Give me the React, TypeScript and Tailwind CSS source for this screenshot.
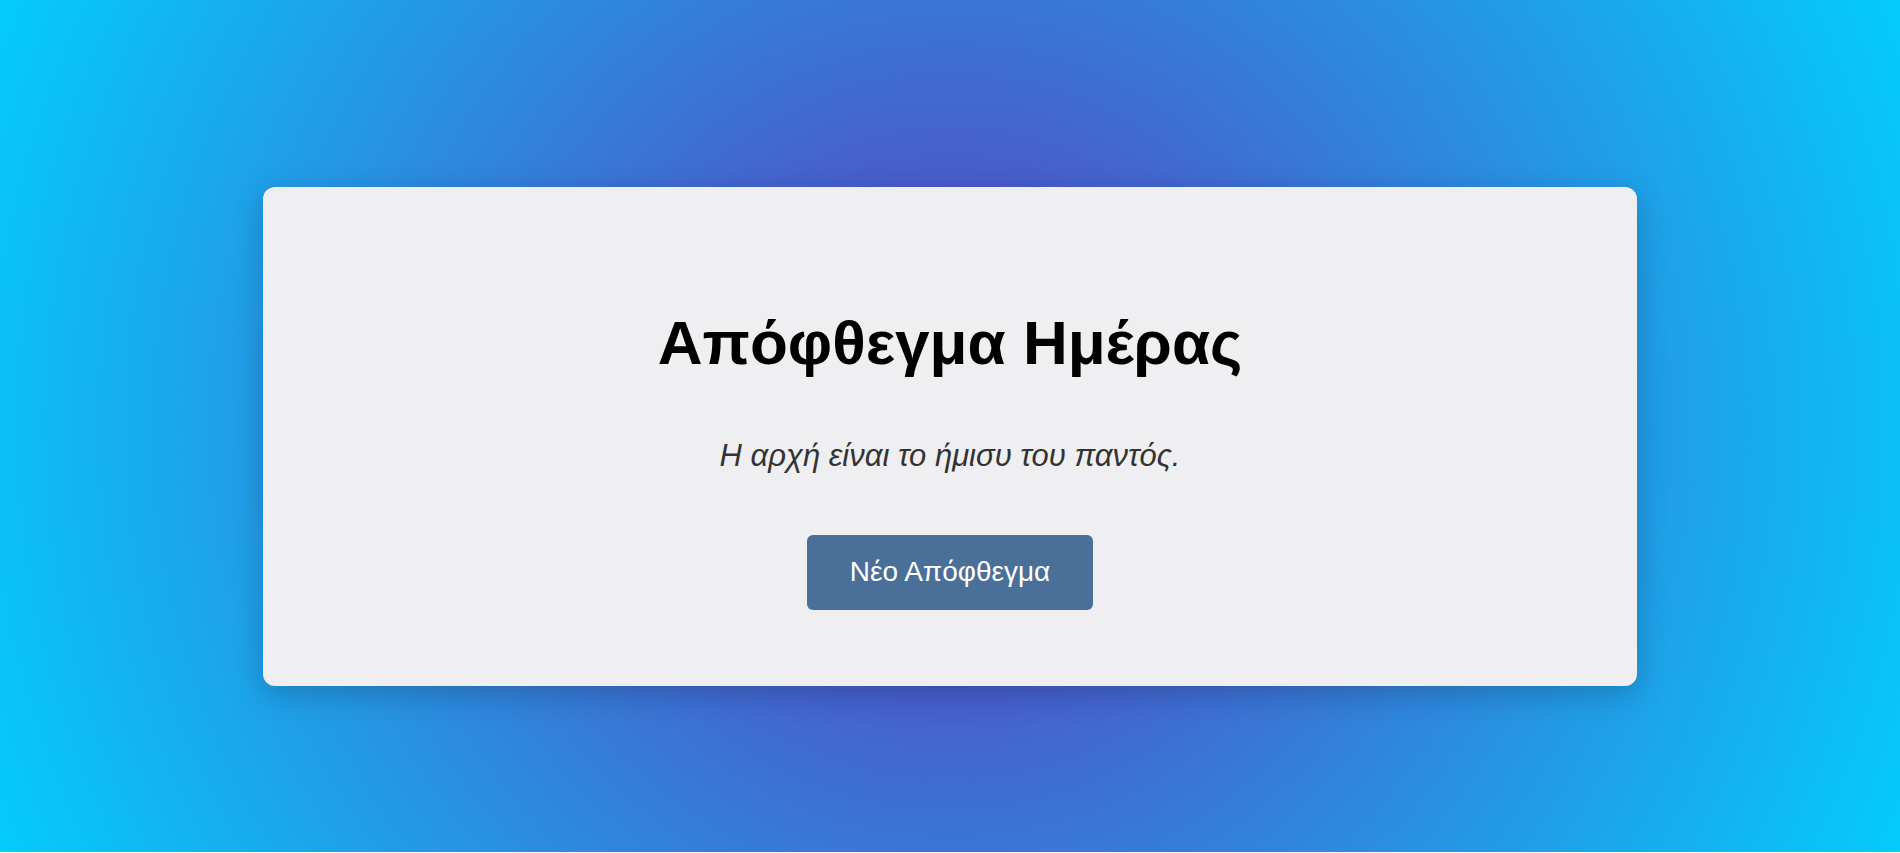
export default function App() {
  return (
    <div className="flex h-[852px] w-full items-center justify-center bg-[radial-gradient(circle,#4e54c8_18%,#00d2ff_104%)] pt-[20px] font-['Liberation_Sans',Arial,sans-serif]">
      <div className="flex w-[1374px] flex-col items-center rounded-xl bg-[#efeff1] pt-[120px] pb-[76px] shadow-[0_8px_30px_rgba(0,0,0,0.2)]">
        <h1 className="text-[62px] leading-[71px] font-bold text-black">Απόφθεγμα Ημέρας</h1>
        <p className="mt-[60px] text-[31px] leading-[35px] text-[#333] italic">
          Η αρχή είναι το ήμισυ του παντός.
        </p>
        <button className="mt-[62px] flex h-[75px] items-center rounded-md bg-[#4a6f98] px-[43px] text-[28px] text-white">
          Νέο Απόφθεγμα
        </button>
      </div>
    </div>
  );
}
